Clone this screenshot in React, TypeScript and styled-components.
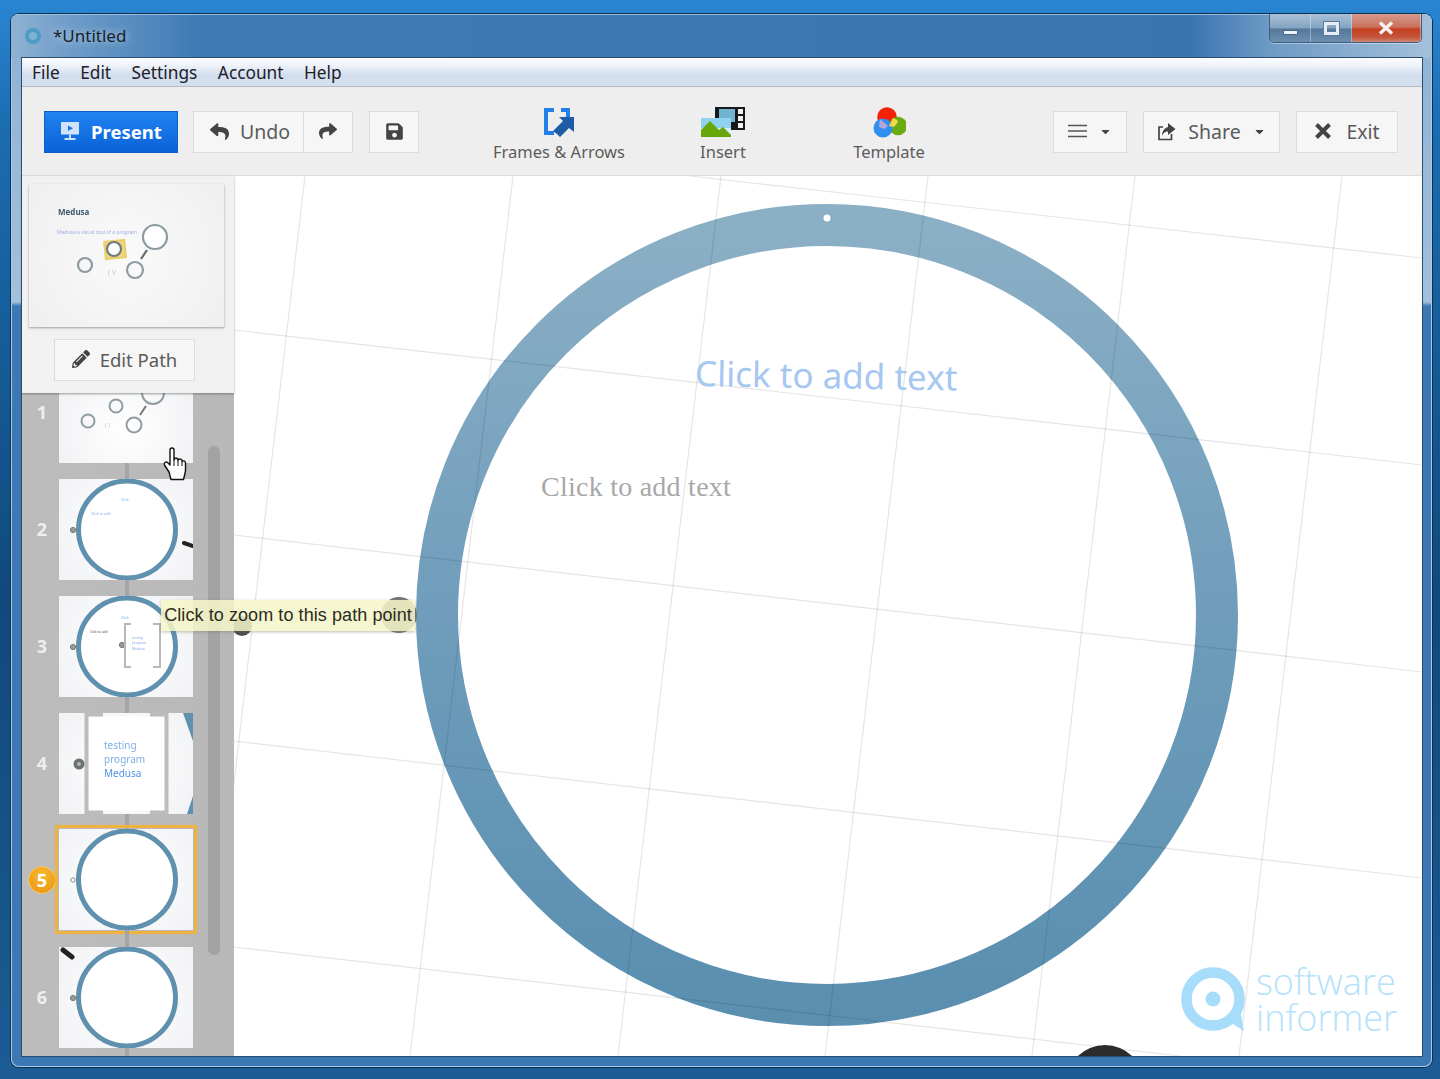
import React from "react";
import styled, { createGlobalStyle } from "styled-components";
import { FaReply, FaShare, FaSave, FaCaretDown, FaPencilAlt } from "react-icons/fa";

const UI = `"Noto Sans", "Open Sans", sans-serif`;

const Global = createGlobalStyle`
  html, body { margin: 0; padding: 0; width: 1440px; height: 1079px; overflow: hidden; }
  * { box-sizing: border-box; }
`;

const Desktop = styled.div`
  width: 1440px;
  height: 1079px;
  padding: 14px 8px 12px 11px;
  background: linear-gradient(180deg, #2a86d2 0, #1b6cb0 130px, #10497c 600px, #1c5b94 100%);
  font-family: ${UI};
`;

const Win = styled.div`
  height: 100%;
  display: flex;
  flex-direction: column;
  border-radius: 8px;
  overflow: hidden;
  background: linear-gradient(180deg, #8db2d5 0, #a3c0dc 288px, #3c78b4 292px, #3c78b4 100%);
  box-shadow: 0 0 0 1px #0d2f50, inset 0 0 0 1px #a7cbe9;
`;

const TitleBar = styled.div`
  flex: 0 0 44px;
  display: flex;
  align-items: flex-start;
  justify-content: space-between;
  padding: 0 10px 0 0;
  border-top: 1px solid #9cc0df;
  background: linear-gradient(90deg, #8fb2d3 0, #6d9cc8 60px, #3f7ab5 190px, #3a75b0 1180px, #6d9ac5 1258px, #a3c0da 1421px);
`;

const TitleLeft = styled.div`
  display: flex;
  align-items: center;
  gap: 12px;
  height: 41px;
  padding-left: 14px;
`;

const AppDot = styled.span`
  width: 16px;
  height: 16px;
  border-radius: 50%;
  border: 4px solid #4e9cc4;
  background: #7ab3d4;
`;

const TitleText = styled.span`
  font-size: 17px;
  color: #16222e;
  text-shadow: 0 0 8px rgba(255, 255, 255, 0.7);
`;

const Controls = styled.div`
  display: flex;
  height: 29px;
  width: 153px;
  margin-top: -1px;
  border: 1px solid #3e5f80;
  border-top: 0;
  border-radius: 0 0 5px 5px;
  overflow: hidden;
  box-shadow: 0 1px 0 rgba(255, 255, 255, 0.4);
`;

const Ctl = styled.div<{ $w: number; $close?: boolean }>`
  width: ${(p) => p.$w}px;
  display: flex;
  align-items: center;
  justify-content: center;
  border-right: 1px solid rgba(255, 255, 255, 0.35);
  background: ${(p) =>
    p.$close
      ? "linear-gradient(180deg, #d69a8e 0, #c9735f 45%, #c73e1f 55%, #c2583e 85%, #d08a78 100%)"
      : "linear-gradient(180deg, #a8c0d6 0, #85a5c3 48%, #56799b 55%, #6c8fb0 100%)"};
`;

const MinMark = styled.span`
  width: 15px;
  height: 5px;
  margin-top: 9px;
  background: #eef3f8;
  border: 1px solid #4a6a8a;
`;

const MaxMark = styled.span`
  width: 15px;
  height: 13px;
  border: 3px solid #e6edf4;
  outline: 1px solid #5a7b9b;
`;

const Frame = styled.div`
  flex: 1;
  min-height: 0;
  margin: 0 10px 11px 11px;
  display: flex;
  flex-direction: column;
  background: #fff;
  box-shadow: 0 0 0 1px #2c4d70;
`;

const MenuBar = styled.nav`
  flex: 0 0 29px;
  display: flex;
  align-items: center;
  gap: 20.5px;
  padding: 1px 0 0 10px;
  font-size: 17.3px;
  color: #1c2026;
  background: linear-gradient(180deg, #fbfcfe 0, #eef2f9 28%, #d3deef 60%, #d3deee 100%);
  border-bottom: 1px solid #b6b9c6;
`;

const Toolbar = styled.div`
  flex: 0 0 89px;
  display: flex;
  align-items: center;
  padding: 2px 24px 0 22px;
  background: #efeeee;
  border-bottom: 1px solid #dedede;
`;

const Btn = styled.button<{ $w: number; $ml?: number; $gap?: number }>`
  width: ${(p) => p.$w}px;
  height: 42px;
  margin-left: ${(p) => p.$ml ?? 0}px;
  padding: 0 0 2px;
  display: flex;
  align-items: center;
  justify-content: center;
  gap: ${(p) => p.$gap ?? 11}px;
  border: 1px solid #dcdcdc;
  background: #f6f6f6;
  color: #5a5a5a;
  font-family: ${UI};
  font-size: 19.5px;
  svg { flex: none; color: #444; }
`;

const PresentBtn = styled(Btn)`
  font-size: 18.5px;
  border: 1px solid #0f5fc8;
  background: linear-gradient(180deg, #2283f2 0, #0a62d8 100%);
  color: #fff;
  font-weight: 700;
`;

const SplitLeft = styled(Btn)`
  border-right: 0;
  padding-left: 3px;
`;

const Tool = styled.div<{ $w: number; $ml?: number }>`
  width: ${(p) => p.$w}px;
  margin-left: ${(p) => p.$ml ?? 0}px;
  display: flex;
  flex-direction: column;
  align-items: center;
  margin-top: 5px;
`;

const ToolIcon = styled.svg`
  display: block;
  height: 32px;
`;

const ToolText = styled.span`
  font-size: 16.5px;
  line-height: 22px;
  margin-top: 3px;
  color: #5c5c5c;
`;

const RightTools = styled.div`
  margin-left: auto;
  display: flex;
  gap: 16px;
`;

const Body = styled.div`
  position: relative;
  flex: 1;
  min-height: 0;
  display: flex;
`;

const Side = styled.aside`
  flex: 0 0 212px;
  display: flex;
  flex-direction: column;
  background: #bbbaba;
`;

const SideTop = styled.div`
  flex: 0 0 217px;
  padding: 8px 10px 0 7px;
  display: flex;
  flex-direction: column;
  align-items: center;
  background: #f1f1f1;
  box-shadow: 0 1px 2px rgba(60, 60, 60, 0.5);
  z-index: 1;
`;

const Preview = styled.svg`
  display: block;
  width: 195px;
  height: 143px;
  background: radial-gradient(circle at 50% 50%, #fafafa 0, #efefef 100%);
  box-shadow: 0 1px 2px rgba(90, 90, 90, 0.55);
  & > g, & > text { filter: blur(0.45px); }
`;

const EditBtn = styled(Btn)`
  margin-top: 12px;
  margin-left: -4px;
  font-size: 18.5px;
`;

const List = styled.div`
  position: relative;
  flex: 1;
  min-height: 0;
  overflow: hidden;
  display: flex;
  flex-direction: column;
  gap: 16px;
  background: linear-gradient(90deg, #bcbcbc 0, #b9b8b8 100%);
`;

const Bar = styled.div`
  position: absolute;
  left: 186px;
  top: 53px;
  width: 12px;
  height: 509px;
  border-radius: 6px;
  background: #a4a3a3;
`;

const Row = styled.div`
  display: flex;
  align-items: center;
  flex: none;
`;

const Num = styled.span<{ $lift?: number }>`
  width: 37px;
  padding-left: 3px;
  padding-bottom: ${(p) => p.$lift ?? 2}px;
  text-align: center;
  font-size: 18px;
  font-weight: 700;
  color: #eeeeee;
`;

const Badge = styled.span`
  position: absolute;
  left: 6px;
  top: 50%;
  width: 28px;
  height: 28px;
  margin-top: -14px;
  display: flex;
  align-items: center;
  justify-content: center;
  border-radius: 50%;
  border: 1px solid #f7cc70;
  background: radial-gradient(circle at 50% 30%, #f8b930 0, #e8930c 100%);
  font-size: 18px;
  font-weight: 700;
  color: #fff;
`;

const ActiveRow = styled(Row)`
  position: relative;
  margin-top: -1px;
  margin-bottom: 1px;
`;

const Thumb = styled.div<{ $h?: number; $on?: boolean }>`
  position: relative;
  width: 134px;
  height: ${(p) => p.$h ?? 101}px;
  background: radial-gradient(circle at 50% 50%, #ffffff 0, #f1f2f4 100%);
  outline: ${(p) => (p.$on ? "3px solid #efb23f" : "none")};
  outline-offset: ${(p) => (p.$on ? "1px" : "0")};
  &::after {
    content: "";
    position: absolute;
    left: 66px;
    top: 100%;
    width: 4px;
    height: 17px;
    background: #a6a5a5;
  }
  svg { display: block; filter: blur(0.4px); }
`;

const Canvas = styled.main`
  position: relative;
  flex: 1;
  min-width: 0;
  overflow: hidden;
  background: #fff;
`;

const CanvasArt = styled.svg`
  position: absolute;
  inset: 0;
  width: 100%;
  height: 100%;
`;

const BlueText = styled.div`
  position: absolute;
  left: 461px;
  top: 173px;
  white-space: nowrap;
  font-size: 35px;
  line-height: 48px;
  color: #a5c7f0;
  transform: rotate(1deg);
  transform-origin: left center;
`;

const SerifText = styled.div`
  position: absolute;
  left: 307px;
  top: 294px;
  white-space: nowrap;
  font-family: "Liberation Serif", serif;
  font-size: 28px;
  line-height: 34px;
  letter-spacing: 0.25px;
  color: #a8a8a8;
`;

const Mark = styled.div`
  position: absolute;
  right: 25px;
  bottom: 20px;
  display: flex;
  align-items: center;
  gap: 9px;
`;

const MarkText = styled.div`
  font-family: "Open Sans", sans-serif;
  font-weight: 300;
  font-size: 36px;
  line-height: 36px;
  color: #b4e1fb;
`;

const Tip = styled.div`
  position: absolute;
  left: 139px;
  top: 424px;
  width: 254px;
  height: 31px;
  display: flex;
  align-items: center;
  justify-content: center;
  white-space: nowrap;
  font-family: "Liberation Sans", Arial, sans-serif;
  font-size: 18px;
  letter-spacing: 0.08px;
  color: #2c2c20;
  background: rgba(245, 245, 200, 0.86);
  box-shadow: 0 1px 3px rgba(110, 110, 80, 0.45);
  z-index: 3;
`;

const HandCursor = styled.svg`
  position: absolute;
  left: 139px;
  top: 270px;
  z-index: 3;
`;

const Ring = () => <circle cx="68" cy="50.5" r="48.5" fill="#fff" stroke="#5f90ae" strokeWidth="5" />;
const Node = ({ x = 14, y = 51 }: { x?: number; y?: number }) => (
  <circle cx={x} cy={y} r="2.6" fill="#9a9a9a" stroke="#777" strokeWidth="1" />
);

const Tiny = styled.text<{ $c?: string }>`
  font-family: ${UI};
  fill: ${(p) => p.$c ?? "#7faee6"};
`;

const Art = ({ h = 101, children }: { h?: number; children: React.ReactNode }) => (
  <svg width="134" height={h} viewBox={`0 0 134 ${h}`}>{children}</svg>
);

const lines = [
  [456, 0, 1188, 82],
  [0, 154, 1188, 289],
  [0, 359, 1188, 496],
  [0, 565, 1188, 702],
  [0, 771, 946, 880],
  [71, 0, -32, 880],
  [279, 0, 176, 880],
  [487, 0, 384, 880],
  [694, 0, 591, 880],
  [901, 0, 798, 880],
  [1108, 0, 1005, 880],
];

export default function App() {
  return (
    <Desktop>
      <Global />
      <Win>
        <TitleBar>
          <TitleLeft>
            <AppDot />
            <TitleText>*Untitled</TitleText>
          </TitleLeft>
          <Controls>
            <Ctl $w={42}><MinMark /></Ctl>
            <Ctl $w={41}><MaxMark /></Ctl>
            <Ctl $w={70} $close>
              <svg width="18" height="14" viewBox="0 0 18 14">
                <path d="M3 1.5 15 12.5M15 1.5 3 12.5" stroke="#f3f1ee" strokeWidth="3.4" fill="none" />
              </svg>
            </Ctl>
          </Controls>
        </TitleBar>
        <Frame>
          <MenuBar>
            <span>File</span>
            <span>Edit</span>
            <span>Settings</span>
            <span>Account</span>
            <span>Help</span>
          </MenuBar>
          <Toolbar>
            <PresentBtn $w={134}>
              <svg width="20" height="20" viewBox="0 0 20 20">
                <path d="M1 1h18v12.5H1z" fill="#cfe4fb" />
                <path d="M8 4.5 13 7.3 8 10z" fill="#1c75e8" />
                <path d="M9 13.5h2V17H9zM4.5 17h11v2h-11z" fill="#cfe4fb" />
              </svg>
              Present
            </PresentBtn>
            <SplitLeft $w={110} $ml={15}>
              <FaReply size={19} />
              Undo
            </SplitLeft>
            <Btn $w={50}><FaShare size={18} /></Btn>
            <Btn $w={50} $ml={16}><FaSave size={19} /></Btn>
            <Tool $w={150} $ml={65}>
              <ToolIcon width="32" viewBox="0 0 32 32">
                <path d="M1 2h10v4H5v19h6v4H1z" fill="#2080e8" />
                <path d="M18 2h9v9h-4V6h-5z" fill="#2080e8" />
                <path d="M14 29l-4-3 10-10-4-4h15v15l-5-4-9 9z" fill="#1f5ca6" transform="translate(0 -1)" />
              </ToolIcon>
              <ToolText>Frames &amp; Arrows</ToolText>
            </Tool>
            <Tool $w={178}>
              <ToolIcon width="46" viewBox="0 0 46 32">
                <path d="M15 1h30v23H15z" fill="#16181c" />
                <path d="M19 3h16v13H19z" fill="#6fb4d2" />
                <path d="M38 3h5v5h-5zM38 10h5v5h-5zM38 17h5v5h-5z" fill="#f2f2f2" />
                <path d="M1 12h30v19H1z" fill="#d8eef8" />
                <path d="M1 12h30v10H1z" fill="#8fd2ee" />
                <path d="M1 31V24l9-9 9 9 4-3 8 8v2z" fill="#69a60c" />
              </ToolIcon>
              <ToolText>Insert</ToolText>
            </Tool>
            <Tool $w={154}>
              <ToolIcon width="34" viewBox="0 0 34 32">
                <circle cx="15" cy="11" r="9.8" fill="#f32208" />
                <circle cx="26" cy="20" r="9.2" fill="#6caa12" />
                <circle cx="11" cy="22" r="9.5" fill="#2f90f2" />
                <path d="M17 20l4-8 4 2 1 2-4 5z" fill="#f1d94b" />
                <path d="M8 13l8 7-4 3-5-2z" fill="#b7a6d8" />
              </ToolIcon>
              <ToolText>Template</ToolText>
            </Tool>
            <RightTools>
              <Btn $w={74} $gap={12}>
                <svg width="19" height="14" viewBox="0 0 19 14">
                  <path d="M0 1.5h19M0 7h19M0 12.5h19" stroke="#555" strokeWidth="1.6" />
                </svg>
                <FaCaretDown size={13} />
              </Btn>
              <Btn $w={137} $gap={12}>
                <svg width="19" height="19" viewBox="0 0 19 19">
                  <path d="M6 5H2v12.5h12.5V12" fill="none" stroke="#444" strokeWidth="1.7" />
                  <path d="M11 1l7.5 6-7.5 6V9.5C8 9.5 6 11 5 14c0-5 2.5-8 6-9z" fill="#444" />
                </svg>
                Share
                <FaCaretDown size={13} />
              </Btn>
              <Btn $w={102} $gap={14}>
                <svg width="18" height="18" viewBox="0 0 18 18">
                  <path d="M2.5 2.5 15.5 15.5M15.5 2.5 2.5 15.5" stroke="#444" strokeWidth="4" fill="none" />
                </svg>
                Exit
              </Btn>
            </RightTools>
          </Toolbar>
          <Body>
            <Side>
              <SideTop>
                <Preview viewBox="0 0 195 143">
                  <Tiny x="29" y="31" fontSize="8" fontWeight="700" $c="#3c5a70">Medusa</Tiny>
                  <Tiny x="28" y="50" fontSize="5" $c="#9fb0e0">Medusa a visual tool of a program</Tiny>
                  <g fill="none" stroke="#8e9aa2" strokeWidth="2.2">
                    <rect x="76" y="57" width="20" height="17" fill="#f0d878" stroke="#e9cf70" transform="rotate(-6 86 65)" />
                    <circle cx="126" cy="53" r="12" fill="#fff" />
                    <circle cx="85" cy="65" r="7" fill="#fff" stroke="#6e7a80" />
                    <circle cx="56" cy="81" r="7" />
                    <circle cx="106" cy="86" r="8" />
                    <path d="M112 75l6-9" stroke="#6a6a6a" />
                  </g>
                  <Tiny x="79" y="91" fontSize="7" $c="#c4c4c4">( V</Tiny>
                </Preview>
                <EditBtn $w={141} $gap={10}>
                  <FaPencilAlt size={18} />
                  Edit Path
                </EditBtn>
              </SideTop>
              <List>
                <Bar />
                <Row>
                  <Num $lift={32}>1</Num>
                  <Thumb $h={70}>
                    <Art h={70}>
                      <g fill="none" stroke="#8f9ca4" strokeWidth="2">
                        <circle cx="29" cy="28" r="6.5" />
                        <circle cx="57" cy="13" r="6.5" />
                        <circle cx="75" cy="32" r="7.5" />
                        <circle cx="94" cy="0" r="11" />
                        <path d="M81 22l6-9" stroke="#777" />
                      </g>
                      <Tiny x="46" y="34" fontSize="6" $c="#bfc6d6">( )</Tiny>
                    </Art>
                  </Thumb>
                </Row>
                <Row>
                  <Num>2</Num>
                  <Thumb>
                    <Art>
                      <Ring />
                      <Node />
                      <Tiny x="62" y="22" fontSize="3.6">Click</Tiny>
                      <Tiny x="32" y="36" fontSize="3.6">Click to add</Tiny>
                      <path d="M125 64l9 3" stroke="#222" strokeWidth="4" strokeLinecap="round" />
                    </Art>
                  </Thumb>
                </Row>
                <Row>
                  <Num>3</Num>
                  <Thumb>
                    <Art>
                      <Ring />
                      <Node />
                      <Node x={63} y={49} />
                      <Tiny x="62" y="23" fontSize="3.6">Click</Tiny>
                      <Tiny x="31" y="37" fontSize="3.2" $c="#555">Click to add</Tiny>
                      <path d="M72 28h-6v43h6M94 28h7v43h-7" fill="none" stroke="#b8b8b8" strokeWidth="2" />
                      <Tiny x="73" y="43" fontSize="3.4">testing</Tiny>
                      <Tiny x="73" y="48" fontSize="3.4">program</Tiny>
                      <Tiny x="73" y="54" fontSize="3.4">Medusa</Tiny>
                    </Art>
                  </Thumb>
                </Row>
                <Row>
                  <Num>4</Num>
                  <Thumb>
                    <Art>
                      <path d="M124 0h10v28zM134 83v18h-6z" fill="#5f90ae" />
                      <path d="M29.5 3.5h76v94h-76z" fill="#fff" />
                      <path d="M44 1.5H27.5v98H44M91 1.5h16.5v98H91" fill="none" stroke="#bcbcbc" strokeWidth="4" />
                      <circle cx="20" cy="51" r="5.5" fill="#6b7272" />
                      <circle cx="20" cy="51" r="2" fill="#b5b5b5" />
                      <Tiny x="45" y="36" fontSize="10">testing</Tiny>
                      <Tiny x="45" y="50" fontSize="10">program</Tiny>
                      <Tiny x="45" y="64" fontSize="10" $c="#4f93e6">Medusa</Tiny>
                    </Art>
                  </Thumb>
                </Row>
                <ActiveRow>
                  <Badge>5</Badge>
                  <Num />
                  <Thumb $on>
                    <Art>
                      <Ring />
                      <circle cx="14" cy="51" r="2.2" fill="#fff" stroke="#7f8a90" />
                    </Art>
                  </Thumb>
                </ActiveRow>
                <Row>
                  <Num>6</Num>
                  <Thumb>
                    <Art>
                      <Ring />
                      <Node />
                      <path d="M4 3l9 7" stroke="#222" strokeWidth="5" strokeLinecap="round" />
                    </Art>
                  </Thumb>
                </Row>
              </List>
            </Side>
            <Canvas>
              <CanvasArt viewBox="0 0 1188 880">
                <defs>
                  <linearGradient id="ring" x1="0" y1="0" x2="0" y2="1">
                    <stop offset="0" stopColor="#8bafc5" />
                    <stop offset="0.5" stopColor="#6f9dbb" />
                    <stop offset="1" stopColor="#5a8fb0" />
                  </linearGradient>
                </defs>
                <circle cx="593" cy="439" r="390" fill="none" stroke="url(#ring)" strokeWidth="42" />
                {lines.map(([a, b, c, d], i) => (
                  <line key={i} x1={a} y1={b} x2={c} y2={d} stroke="#000" strokeOpacity="0.1" strokeWidth="1.2" />
                ))}
                <circle cx="593" cy="42" r="3.5" fill="#fff" />
                <circle cx="165" cy="439" r="18" fill="#77787a" />
                <circle cx="8" cy="450" r="10" fill="#4b4b4b" />
                <circle cx="871" cy="908" r="39" fill="#2c2c2c" />
              </CanvasArt>
              <BlueText>Click to add text</BlueText>
              <SerifText>Click to add text</SerifText>
              <Mark>
                <svg width="66" height="66" viewBox="0 0 66 66">
                  <circle cx="32" cy="32" r="26.5" fill="none" stroke="#a8dcfb" strokeWidth="10.5" />
                  <circle cx="32" cy="32" r="7.5" fill="#a8dcfb" />
                  <path d="M47 54l12-12 4 22z" fill="#a8dcfb" />
                </svg>
                <MarkText>software<br />informer</MarkText>
              </Mark>
            </Canvas>
            <Tip>Click to zoom to this path point</Tip>
            <HandCursor width="26" height="36" viewBox="0 0 26 36">
              <path
                d="M8 26 3.5 19a2 2 0 0 1 3-2.5L9 19V4a2 2 0 0 1 4 0v10a2 2 0 0 1 4 .6 2 2 0 0 1 4 1 2 2 0 0 1 3.5 1.6V25l-2 8.5H10z"
                fill="#fff"
                stroke="#111"
                strokeWidth="1.4"
                strokeLinejoin="round"
              />
              <path d="M13 14v6M17 15v5M21 16v4" stroke="#111" strokeWidth="1" />
            </HandCursor>
          </Body>
        </Frame>
      </Win>
    </Desktop>
  );
}
